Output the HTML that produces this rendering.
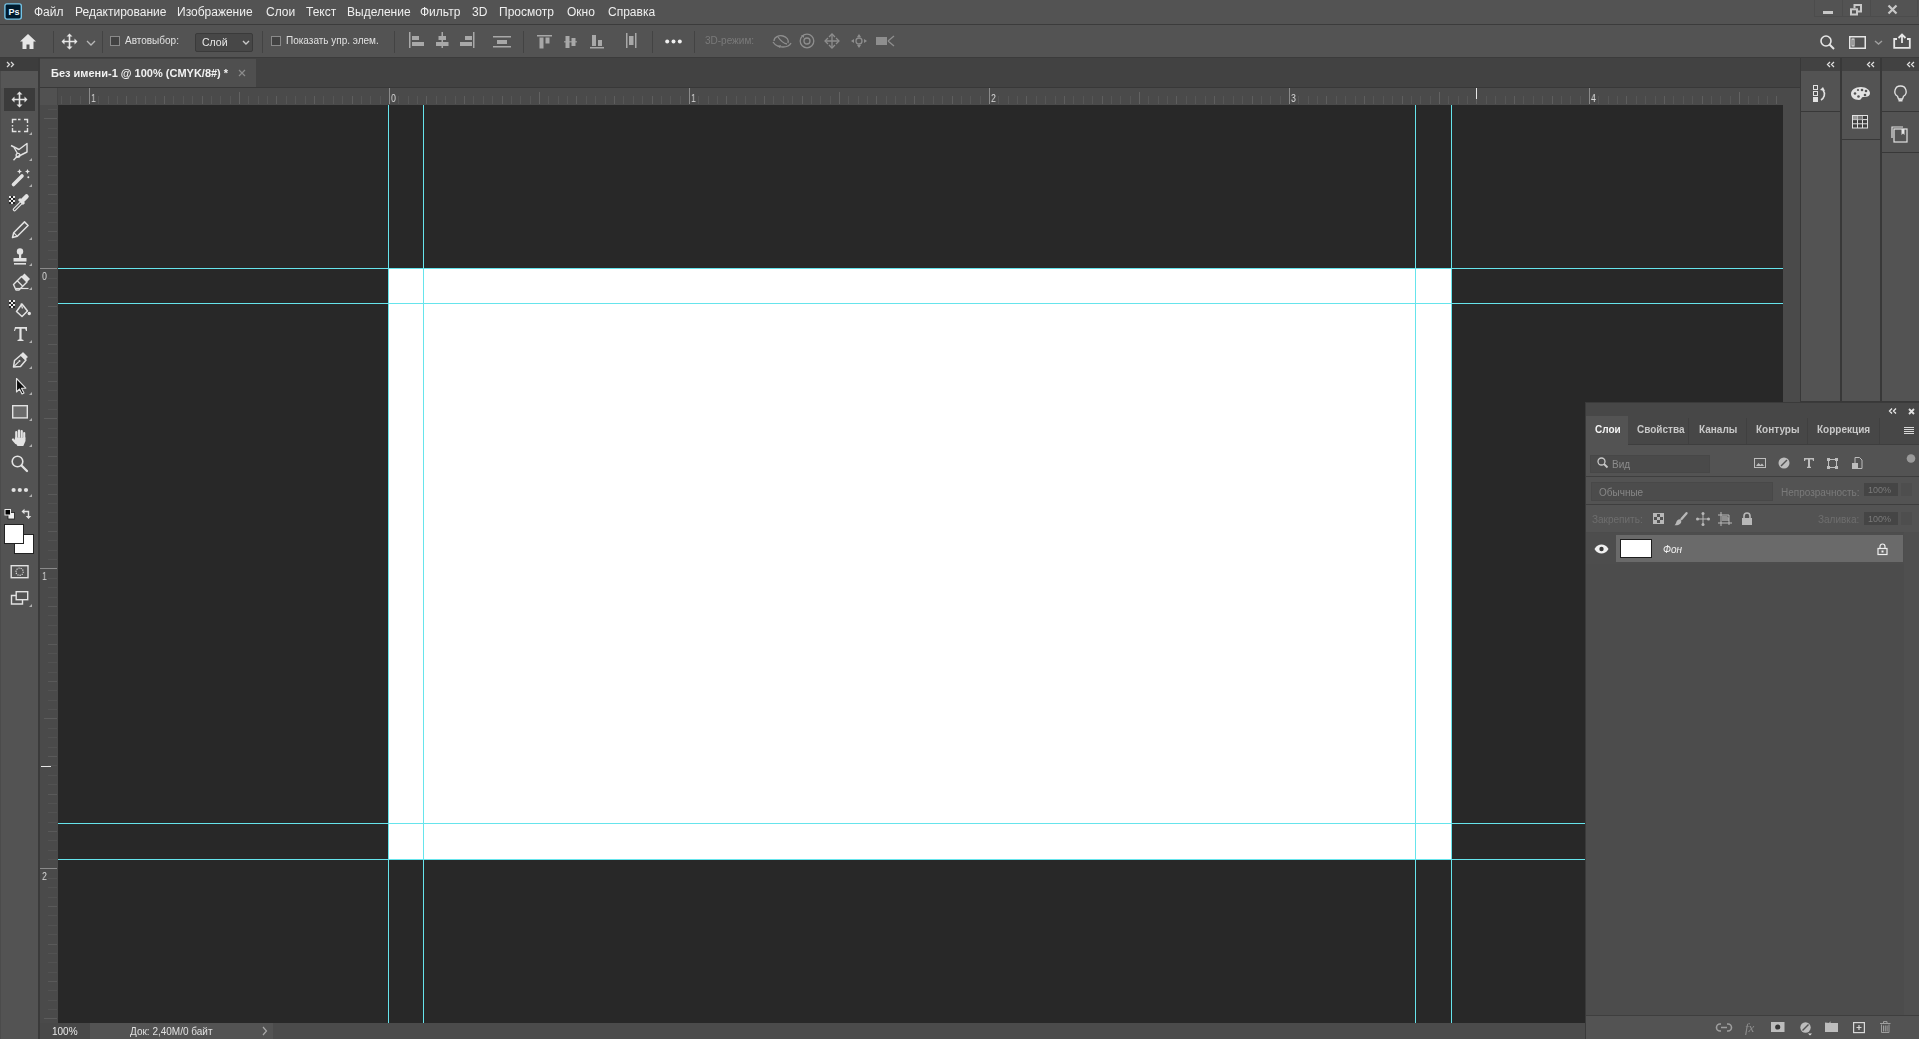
<!DOCTYPE html>
<html><head><meta charset="utf-8">
<style>
*{box-sizing:border-box;margin:0;padding:0}
html,body{width:1919px;height:1039px;overflow:hidden;background:#535353;font-family:"Liberation Sans",sans-serif;color:#e8e8e8}
.a{position:absolute}
.t{position:absolute;white-space:nowrap;line-height:1;will-change:transform}
svg{position:absolute;overflow:visible}
</style></head><body>

<div class="a" style="left:0px;top:0px;width:1919px;height:24px;background:#535353;"></div>
<div class="a" style="left:0px;top:24px;width:1919px;height:1px;background:#3b3b3b;"></div>
<svg style="left:4px;top:3px;" width="19" height="17" viewBox="0 0 19 17"><rect x="0.9" y="0.9" width="16.4" height="15.2" rx="2" fill="#001b2e" stroke="#74c4e6" stroke-width="1.4"/><text x="4.6" y="12.2" font-family="Liberation Sans" font-weight="700" font-size="9" fill="#f0faff">Ps</text></svg>
<div class="t" style="left:34px;top:5.84px;font-size:12px;color:#efefef;font-weight:400;font-style:normal;">Файл</div>
<div class="t" style="left:75px;top:5.84px;font-size:12px;color:#efefef;font-weight:400;font-style:normal;">Редактирование</div>
<div class="t" style="left:177px;top:5.84px;font-size:12px;color:#efefef;font-weight:400;font-style:normal;">Изображение</div>
<div class="t" style="left:266px;top:5.84px;font-size:12px;color:#efefef;font-weight:400;font-style:normal;">Слои</div>
<div class="t" style="left:306px;top:5.84px;font-size:12px;color:#efefef;font-weight:400;font-style:normal;">Текст</div>
<div class="t" style="left:347px;top:5.84px;font-size:12px;color:#efefef;font-weight:400;font-style:normal;">Выделение</div>
<div class="t" style="left:420px;top:5.84px;font-size:12px;color:#efefef;font-weight:400;font-style:normal;">Фильтр</div>
<div class="t" style="left:472px;top:5.84px;font-size:12px;color:#efefef;font-weight:400;font-style:normal;">3D</div>
<div class="t" style="left:499px;top:5.84px;font-size:12px;color:#efefef;font-weight:400;font-style:normal;">Просмотр</div>
<div class="t" style="left:567px;top:5.84px;font-size:12px;color:#efefef;font-weight:400;font-style:normal;">Окно</div>
<div class="t" style="left:608px;top:5.84px;font-size:12px;color:#efefef;font-weight:400;font-style:normal;">Справка</div>
<div class="a" style="left:1823px;top:11px;width:10px;height:3px;background:#c8c8c8;"></div>
<svg style="left:0px;top:0px;" width="1" height="1" viewBox="0 0 1 1"><path d="M1854.5 8V5h6.5v6.5h-3" fill="none" stroke="#c8c8c8" stroke-width="2"/><rect x="1851" y="9.3" width="6" height="5.2" fill="none" stroke="#c8c8c8" stroke-width="2"/></svg>
<div class="a" style="left:1814px;top:0px;width:1px;height:17px;background:#4c4c4c;"></div>
<div class="a" style="left:1842px;top:0px;width:1px;height:17px;background:#4c4c4c;"></div>
<div class="a" style="left:1870px;top:0px;width:1px;height:17px;background:#4c4c4c;"></div>
<div class="a" style="left:1917px;top:0px;width:1px;height:17px;background:#4c4c4c;"></div>
<div class="a" style="left:1814px;top:16px;width:104px;height:1px;background:#4c4c4c;"></div>
<div class="a" style="left:0px;top:25px;width:1px;height:32px;background:#464646;"></div>
<svg style="left:1887px;top:4px;" width="12" height="10" viewBox="0 0 12 10"><path d="M1.5 1.5l8 8M9.5 1.5l-8 8" stroke="#c8c8c8" stroke-width="2.2"/></svg>
<div class="a" style="left:0px;top:25px;width:1919px;height:32px;background:#535353;"></div>
<div class="a" style="left:0px;top:57px;width:1919px;height:1px;background:#3b3b3b;"></div>
<svg style="left:19px;top:33px;" width="18" height="17" viewBox="0 0 18 17"><path d="M9 1L1 8.5h2.5V16h4v-4.5h3V16h4V8.5H17z" fill="#e6e6e6"/></svg>
<div class="a" style="left:53px;top:31px;width:1px;height:22px;background:#434343;"></div>
<svg style="left:0px;top:0px;" width="1" height="1" viewBox="0 0 1 1"><g transform="translate(69.5,41.5) scale(1.0)" fill="#e6e6e6" stroke="#e6e6e6"><path d="M-6 0H6M0 -6V6" stroke-width="1.6"/><path d="M-8 0l3-3v6zM8 0l-3-3v6zM0 -8l-3 3h6zM0 8l-3-3h6z" stroke="none"/></g></svg>
<svg style="left:86px;top:40px;" width="10" height="6" viewBox="0 0 10 6"><path d="M1 1l4 4 4-4" fill="none" stroke="#b8b8b8" stroke-width="1.3"/></svg>
<div class="a" style="left:102px;top:31px;width:1px;height:22px;background:#434343;"></div>
<div class="a" style="left:110px;top:36px;width:10px;height:10px;background:#424242;border:1px solid #8a8a8a"></div>
<div class="t" style="left:125px;top:35.83px;font-size:10px;color:#e0e0e0;font-weight:400;font-style:normal;">Автовыбор:</div>
<div class="a" style="left:195px;top:33px;width:58px;height:19px;background:#474747;border:1px solid #3a3a3a;border-radius:2px"></div>
<div class="t" style="left:202px;top:37.11px;font-size:10.5px;color:#e8e8e8;font-weight:400;font-style:normal;">Слой</div>
<svg style="left:242px;top:40px;" width="8" height="6" viewBox="0 0 8 6"><path d="M1 1l3 3 3-3" fill="none" stroke="#c8c8c8" stroke-width="1.4"/></svg>
<div class="a" style="left:262px;top:31px;width:1px;height:22px;background:#434343;"></div>
<div class="a" style="left:271px;top:36px;width:10px;height:10px;background:#424242;border:1px solid #8a8a8a"></div>
<div class="t" style="left:286px;top:35.83px;font-size:10px;color:#e0e0e0;font-weight:400;font-style:normal;">Показать упр. элем.</div>
<div class="a" style="left:394px;top:31px;width:1px;height:22px;background:#434343;"></div>
<svg style="left:409px;top:32px;" width="16" height="17" viewBox="0 0 16 17"><rect x="0" y="0" width="1.5" height="16" fill="#a8a8a8"/><rect x="3" y="4" width="7" height="4" fill="#a8a8a8"/><rect x="3" y="10" width="12" height="4" fill="#a8a8a8"/></svg>
<svg style="left:436px;top:32px;" width="14" height="17" viewBox="0 0 14 17"><rect x="5.5" y="0" width="1.5" height="16" fill="#a8a8a8"/><rect x="2.5" y="4" width="7.5" height="4" fill="#a8a8a8"/><rect x="0" y="10" width="12.5" height="4" fill="#a8a8a8"/></svg>
<svg style="left:460px;top:32px;" width="16" height="17" viewBox="0 0 16 17"><rect x="13" y="0" width="1.5" height="16" fill="#a8a8a8"/><rect x="5" y="4" width="7" height="4" fill="#a8a8a8"/><rect x="0" y="10" width="12" height="4" fill="#a8a8a8"/></svg>
<svg style="left:493px;top:36px;" width="19" height="12" viewBox="0 0 19 12"><rect x="0" y="0" width="18" height="1.5" fill="#a8a8a8"/><rect x="4" y="4" width="10" height="4" fill="#a8a8a8"/><rect x="0" y="10" width="18" height="1.5" fill="#a8a8a8"/></svg>
<div class="a" style="left:523px;top:31px;width:1px;height:22px;background:#434343;"></div>
<svg style="left:537px;top:35px;" width="16" height="14" viewBox="0 0 16 14"><rect x="0" y="0" width="15" height="1.5" fill="#a8a8a8"/><rect x="2.5" y="2.5" width="4" height="11" fill="#a8a8a8"/><rect x="8.5" y="2.5" width="4" height="6" fill="#a8a8a8"/></svg>
<svg style="left:564px;top:35px;" width="14" height="14" viewBox="0 0 14 14"><rect x="0" y="6" width="13" height="1.5" fill="#a8a8a8" opacity="0.7"/><rect x="1.5" y="1" width="4" height="12" fill="#a8a8a8"/><rect x="7.5" y="3" width="4" height="8" fill="#a8a8a8"/></svg>
<svg style="left:590px;top:34px;" width="15" height="15" viewBox="0 0 15 15"><rect x="0" y="13" width="14" height="1.5" fill="#a8a8a8"/><rect x="2" y="1" width="4" height="11" fill="#a8a8a8"/><rect x="8" y="6" width="4" height="6" fill="#a8a8a8"/></svg>
<svg style="left:626px;top:33px;" width="11" height="16" viewBox="0 0 11 16"><rect x="0" y="0" width="1.5" height="15" fill="#a8a8a8"/><rect x="9" y="0" width="1.5" height="15" fill="#a8a8a8"/><rect x="3" y="3" width="4.5" height="9" fill="#a8a8a8"/></svg>
<div class="a" style="left:652px;top:31px;width:1px;height:22px;background:#434343;"></div>
<svg style="left:665px;top:39px;" width="18" height="6" viewBox="0 0 18 6"><circle cx="2.2" cy="2.5" r="2" fill="#f0f0f0"/><circle cx="8.5" cy="2.5" r="2" fill="#f0f0f0"/><circle cx="14.8" cy="2.5" r="2" fill="#f0f0f0"/></svg>
<div class="a" style="left:694px;top:31px;width:1px;height:22px;background:#434343;"></div>
<div class="t" style="left:705px;top:35.83px;font-size:10px;color:#7a7a7a;font-weight:400;font-style:normal;">3D-режим:</div>
<svg style="left:772px;top:33px;" width="20" height="16" viewBox="0 0 20 16"><g fill="none" stroke="#8e8e8e" stroke-width="1.3"><path d="M2 8c0-4 5-6 9-5 4 1 6 4 5 7"/><path d="M1 9c2 3 6 5 10 5 4 0 7-2 8-4"/><path d="M6 4c2 3 4 6 9 7"/></g><path d="M5 13l3 2 1-3z" fill="#8e8e8e"/></svg>
<svg style="left:799px;top:33px;" width="16" height="16" viewBox="0 0 16 16"><g fill="none" stroke="#8e8e8e" stroke-width="1.3"><circle cx="8" cy="8" r="6.8"/><circle cx="8" cy="8" r="3"/></g><path d="M2 2l3 0 0 3z" fill="#8e8e8e"/></svg>
<svg style="left:824px;top:33px;" width="16" height="16" viewBox="0 0 16 16"><g fill="none" stroke="#8e8e8e" stroke-width="1.3"><path d="M8 1v14M1 8h14"/><path d="M5 4l3-3 3 3M5 12l3 3 3-3M4 5l-3 3 3 3M12 5l3 3-3 3"/></g></svg>
<svg style="left:850px;top:33px;" width="18" height="16" viewBox="0 0 18 16"><g fill="#8e8e8e"><circle cx="9" cy="8" r="3" fill="none" stroke="#8e8e8e" stroke-width="1.3"/><path d="M9 1l2 3H7zM9 15l2-3H7zM1 8l3-2v4zM17 8l-3-2v4z"/></g></svg>
<svg style="left:876px;top:35px;" width="20" height="12" viewBox="0 0 20 12"><g fill="#8e8e8e"><rect x="0" y="2" width="11" height="8"/></g><path d="M12 6l6-5M12 6l6 5" stroke="#8e8e8e" stroke-width="1.3" fill="none"/></svg>
<svg style="left:1820px;top:35px;" width="15" height="15" viewBox="0 0 15 15"><circle cx="6" cy="6" r="5" fill="none" stroke="#e6e6e6" stroke-width="1.6"/><path d="M9.5 9.5l4.5 4.5" stroke="#e6e6e6" stroke-width="2"/></svg>
<svg style="left:1849px;top:36px;" width="17" height="13" viewBox="0 0 17 13"><rect x="0.75" y="0.75" width="15.5" height="11.5" fill="none" stroke="#e6e6e6" stroke-width="1.5"/><rect x="3" y="3" width="2" height="7" fill="none" stroke="#e6e6e6" stroke-width="1"/></svg>
<svg style="left:1874px;top:40px;" width="9" height="5" viewBox="0 0 9 5"><path d="M1 1l3.5 3 3.5-3" fill="none" stroke="#a0a0a0" stroke-width="1.4"/></svg>
<svg style="left:1893px;top:33px;" width="18" height="16" viewBox="0 0 18 16"><path d="M4 6H1.2v8.8h15.6V6H14" fill="none" stroke="#e6e6e6" stroke-width="1.8"/><path d="M9 10V2M5.5 5L9 1.5 12.5 5" fill="none" stroke="#e6e6e6" stroke-width="1.8"/></svg>
<div class="a" style="left:40px;top:58px;width:1760px;height:30px;background:#424242;"></div>
<div class="a" style="left:40px;top:59px;width:216px;height:28px;background:#4f4f4f;"></div>
<div class="a" style="left:40px;top:87px;width:1760px;height:1px;background:#383838;"></div>
<div class="t" style="left:51px;top:67.69px;font-size:11px;color:#f2f2f2;font-weight:700;font-style:normal;">Без имени-1 @ 100% (CMYK/8#) *</div>
<svg style="left:238px;top:69px;" width="8" height="8" viewBox="0 0 8 8"><path d="M1 1l6 6M7 1l-6 6" stroke="#8c8c8c" stroke-width="1.2"/></svg>
<div class="a" style="left:40px;top:88px;width:1760px;height:17px;background:#4a4a4a;"></div>
<div class="a" style="left:40px;top:105px;width:18px;height:918px;background:#4a4a4a;"></div>
<div class="a" style="left:1783px;top:88px;width:17px;height:935px;background:#4a4a4a;"></div>
<div class="a" style="left:40px;top:88px;width:17px;height:17px;background:#515151;"></div>
<div class="a" style="left:57px;top:88px;width:1px;height:17px;background:#444444;"></div>
<svg style="left:0px;top:0px;pointer-events:none" width="1919" height="1039" viewBox="0 0 1919 1039"><rect x="61" y="96" width="1" height="8" fill="#565656"/><rect x="70" y="96" width="1" height="8" fill="#565656"/><rect x="80" y="96" width="1" height="8" fill="#565656"/><rect x="89" y="88" width="1" height="16" fill="#8a8a8a"/><rect x="98" y="96" width="1" height="8" fill="#565656"/><rect x="108" y="96" width="1" height="8" fill="#565656"/><rect x="117" y="96" width="1" height="8" fill="#565656"/><rect x="126" y="96" width="1" height="8" fill="#5e5e5e"/><rect x="136" y="96" width="1" height="8" fill="#565656"/><rect x="145" y="96" width="1" height="8" fill="#565656"/><rect x="155" y="96" width="1" height="8" fill="#565656"/><rect x="164" y="96" width="1" height="8" fill="#5e5e5e"/><rect x="173" y="96" width="1" height="8" fill="#565656"/><rect x="183" y="96" width="1" height="8" fill="#565656"/><rect x="192" y="96" width="1" height="8" fill="#565656"/><rect x="202" y="96" width="1" height="8" fill="#5e5e5e"/><rect x="211" y="96" width="1" height="8" fill="#565656"/><rect x="220" y="96" width="1" height="8" fill="#565656"/><rect x="230" y="96" width="1" height="8" fill="#565656"/><rect x="239" y="92" width="1" height="12" fill="#626262"/><rect x="248" y="96" width="1" height="8" fill="#565656"/><rect x="258" y="96" width="1" height="8" fill="#565656"/><rect x="267" y="96" width="1" height="8" fill="#565656"/><rect x="276" y="96" width="1" height="8" fill="#5e5e5e"/><rect x="286" y="96" width="1" height="8" fill="#565656"/><rect x="295" y="96" width="1" height="8" fill="#565656"/><rect x="305" y="96" width="1" height="8" fill="#565656"/><rect x="314" y="96" width="1" height="8" fill="#5e5e5e"/><rect x="323" y="96" width="1" height="8" fill="#565656"/><rect x="333" y="96" width="1" height="8" fill="#565656"/><rect x="342" y="96" width="1" height="8" fill="#565656"/><rect x="352" y="96" width="1" height="8" fill="#5e5e5e"/><rect x="361" y="96" width="1" height="8" fill="#565656"/><rect x="370" y="96" width="1" height="8" fill="#565656"/><rect x="380" y="96" width="1" height="8" fill="#565656"/><rect x="389" y="88" width="1" height="16" fill="#8a8a8a"/><rect x="398" y="96" width="1" height="8" fill="#565656"/><rect x="408" y="96" width="1" height="8" fill="#565656"/><rect x="417" y="96" width="1" height="8" fill="#565656"/><rect x="426" y="96" width="1" height="8" fill="#5e5e5e"/><rect x="436" y="96" width="1" height="8" fill="#565656"/><rect x="445" y="96" width="1" height="8" fill="#565656"/><rect x="455" y="96" width="1" height="8" fill="#565656"/><rect x="464" y="96" width="1" height="8" fill="#5e5e5e"/><rect x="473" y="96" width="1" height="8" fill="#565656"/><rect x="483" y="96" width="1" height="8" fill="#565656"/><rect x="492" y="96" width="1" height="8" fill="#565656"/><rect x="502" y="96" width="1" height="8" fill="#5e5e5e"/><rect x="511" y="96" width="1" height="8" fill="#565656"/><rect x="520" y="96" width="1" height="8" fill="#565656"/><rect x="530" y="96" width="1" height="8" fill="#565656"/><rect x="539" y="92" width="1" height="12" fill="#626262"/><rect x="548" y="96" width="1" height="8" fill="#565656"/><rect x="558" y="96" width="1" height="8" fill="#565656"/><rect x="567" y="96" width="1" height="8" fill="#565656"/><rect x="576" y="96" width="1" height="8" fill="#5e5e5e"/><rect x="586" y="96" width="1" height="8" fill="#565656"/><rect x="595" y="96" width="1" height="8" fill="#565656"/><rect x="605" y="96" width="1" height="8" fill="#565656"/><rect x="614" y="96" width="1" height="8" fill="#5e5e5e"/><rect x="623" y="96" width="1" height="8" fill="#565656"/><rect x="633" y="96" width="1" height="8" fill="#565656"/><rect x="642" y="96" width="1" height="8" fill="#565656"/><rect x="652" y="96" width="1" height="8" fill="#5e5e5e"/><rect x="661" y="96" width="1" height="8" fill="#565656"/><rect x="670" y="96" width="1" height="8" fill="#565656"/><rect x="680" y="96" width="1" height="8" fill="#565656"/><rect x="689" y="88" width="1" height="16" fill="#8a8a8a"/><rect x="698" y="96" width="1" height="8" fill="#565656"/><rect x="708" y="96" width="1" height="8" fill="#565656"/><rect x="717" y="96" width="1" height="8" fill="#565656"/><rect x="726" y="96" width="1" height="8" fill="#5e5e5e"/><rect x="736" y="96" width="1" height="8" fill="#565656"/><rect x="745" y="96" width="1" height="8" fill="#565656"/><rect x="755" y="96" width="1" height="8" fill="#565656"/><rect x="764" y="96" width="1" height="8" fill="#5e5e5e"/><rect x="773" y="96" width="1" height="8" fill="#565656"/><rect x="783" y="96" width="1" height="8" fill="#565656"/><rect x="792" y="96" width="1" height="8" fill="#565656"/><rect x="802" y="96" width="1" height="8" fill="#5e5e5e"/><rect x="811" y="96" width="1" height="8" fill="#565656"/><rect x="820" y="96" width="1" height="8" fill="#565656"/><rect x="830" y="96" width="1" height="8" fill="#565656"/><rect x="839" y="92" width="1" height="12" fill="#626262"/><rect x="848" y="96" width="1" height="8" fill="#565656"/><rect x="858" y="96" width="1" height="8" fill="#565656"/><rect x="867" y="96" width="1" height="8" fill="#565656"/><rect x="876" y="96" width="1" height="8" fill="#5e5e5e"/><rect x="886" y="96" width="1" height="8" fill="#565656"/><rect x="895" y="96" width="1" height="8" fill="#565656"/><rect x="905" y="96" width="1" height="8" fill="#565656"/><rect x="914" y="96" width="1" height="8" fill="#5e5e5e"/><rect x="923" y="96" width="1" height="8" fill="#565656"/><rect x="933" y="96" width="1" height="8" fill="#565656"/><rect x="942" y="96" width="1" height="8" fill="#565656"/><rect x="952" y="96" width="1" height="8" fill="#5e5e5e"/><rect x="961" y="96" width="1" height="8" fill="#565656"/><rect x="970" y="96" width="1" height="8" fill="#565656"/><rect x="980" y="96" width="1" height="8" fill="#565656"/><rect x="989" y="88" width="1" height="16" fill="#8a8a8a"/><rect x="998" y="96" width="1" height="8" fill="#565656"/><rect x="1008" y="96" width="1" height="8" fill="#565656"/><rect x="1017" y="96" width="1" height="8" fill="#565656"/><rect x="1026" y="96" width="1" height="8" fill="#5e5e5e"/><rect x="1036" y="96" width="1" height="8" fill="#565656"/><rect x="1045" y="96" width="1" height="8" fill="#565656"/><rect x="1055" y="96" width="1" height="8" fill="#565656"/><rect x="1064" y="96" width="1" height="8" fill="#5e5e5e"/><rect x="1073" y="96" width="1" height="8" fill="#565656"/><rect x="1083" y="96" width="1" height="8" fill="#565656"/><rect x="1092" y="96" width="1" height="8" fill="#565656"/><rect x="1102" y="96" width="1" height="8" fill="#5e5e5e"/><rect x="1111" y="96" width="1" height="8" fill="#565656"/><rect x="1120" y="96" width="1" height="8" fill="#565656"/><rect x="1130" y="96" width="1" height="8" fill="#565656"/><rect x="1139" y="92" width="1" height="12" fill="#626262"/><rect x="1148" y="96" width="1" height="8" fill="#565656"/><rect x="1158" y="96" width="1" height="8" fill="#565656"/><rect x="1167" y="96" width="1" height="8" fill="#565656"/><rect x="1176" y="96" width="1" height="8" fill="#5e5e5e"/><rect x="1186" y="96" width="1" height="8" fill="#565656"/><rect x="1195" y="96" width="1" height="8" fill="#565656"/><rect x="1205" y="96" width="1" height="8" fill="#565656"/><rect x="1214" y="96" width="1" height="8" fill="#5e5e5e"/><rect x="1223" y="96" width="1" height="8" fill="#565656"/><rect x="1233" y="96" width="1" height="8" fill="#565656"/><rect x="1242" y="96" width="1" height="8" fill="#565656"/><rect x="1252" y="96" width="1" height="8" fill="#5e5e5e"/><rect x="1261" y="96" width="1" height="8" fill="#565656"/><rect x="1270" y="96" width="1" height="8" fill="#565656"/><rect x="1280" y="96" width="1" height="8" fill="#565656"/><rect x="1289" y="88" width="1" height="16" fill="#8a8a8a"/><rect x="1298" y="96" width="1" height="8" fill="#565656"/><rect x="1308" y="96" width="1" height="8" fill="#565656"/><rect x="1317" y="96" width="1" height="8" fill="#565656"/><rect x="1326" y="96" width="1" height="8" fill="#5e5e5e"/><rect x="1336" y="96" width="1" height="8" fill="#565656"/><rect x="1345" y="96" width="1" height="8" fill="#565656"/><rect x="1355" y="96" width="1" height="8" fill="#565656"/><rect x="1364" y="96" width="1" height="8" fill="#5e5e5e"/><rect x="1373" y="96" width="1" height="8" fill="#565656"/><rect x="1383" y="96" width="1" height="8" fill="#565656"/><rect x="1392" y="96" width="1" height="8" fill="#565656"/><rect x="1402" y="96" width="1" height="8" fill="#5e5e5e"/><rect x="1411" y="96" width="1" height="8" fill="#565656"/><rect x="1420" y="96" width="1" height="8" fill="#565656"/><rect x="1430" y="96" width="1" height="8" fill="#565656"/><rect x="1439" y="92" width="1" height="12" fill="#626262"/><rect x="1448" y="96" width="1" height="8" fill="#565656"/><rect x="1458" y="96" width="1" height="8" fill="#565656"/><rect x="1467" y="96" width="1" height="8" fill="#565656"/><rect x="1476" y="96" width="1" height="8" fill="#5e5e5e"/><rect x="1486" y="96" width="1" height="8" fill="#565656"/><rect x="1495" y="96" width="1" height="8" fill="#565656"/><rect x="1505" y="96" width="1" height="8" fill="#565656"/><rect x="1514" y="96" width="1" height="8" fill="#5e5e5e"/><rect x="1523" y="96" width="1" height="8" fill="#565656"/><rect x="1533" y="96" width="1" height="8" fill="#565656"/><rect x="1542" y="96" width="1" height="8" fill="#565656"/><rect x="1552" y="96" width="1" height="8" fill="#5e5e5e"/><rect x="1561" y="96" width="1" height="8" fill="#565656"/><rect x="1570" y="96" width="1" height="8" fill="#565656"/><rect x="1580" y="96" width="1" height="8" fill="#565656"/><rect x="1589" y="88" width="1" height="16" fill="#8a8a8a"/><rect x="1598" y="96" width="1" height="8" fill="#565656"/><rect x="1608" y="96" width="1" height="8" fill="#565656"/><rect x="1617" y="96" width="1" height="8" fill="#565656"/><rect x="1626" y="96" width="1" height="8" fill="#5e5e5e"/><rect x="1636" y="96" width="1" height="8" fill="#565656"/><rect x="1645" y="96" width="1" height="8" fill="#565656"/><rect x="1655" y="96" width="1" height="8" fill="#565656"/><rect x="1664" y="96" width="1" height="8" fill="#5e5e5e"/><rect x="1673" y="96" width="1" height="8" fill="#565656"/><rect x="1683" y="96" width="1" height="8" fill="#565656"/><rect x="1692" y="96" width="1" height="8" fill="#565656"/><rect x="1702" y="96" width="1" height="8" fill="#5e5e5e"/><rect x="1711" y="96" width="1" height="8" fill="#565656"/><rect x="1720" y="96" width="1" height="8" fill="#565656"/><rect x="1730" y="96" width="1" height="8" fill="#565656"/><rect x="1739" y="92" width="1" height="12" fill="#626262"/><rect x="1748" y="96" width="1" height="8" fill="#565656"/><rect x="1758" y="96" width="1" height="8" fill="#565656"/><rect x="1767" y="96" width="1" height="8" fill="#565656"/><rect x="1776" y="96" width="1" height="8" fill="#5e5e5e"/></svg>
<div class="t" style="left:91px;top:92.69px;font-size:11px;color:#d8d8d8;font-weight:400;font-style:normal;transform:scaleX(0.8);transform-origin:left">1</div>
<div class="t" style="left:391px;top:92.69px;font-size:11px;color:#d8d8d8;font-weight:400;font-style:normal;transform:scaleX(0.8);transform-origin:left">0</div>
<div class="t" style="left:691px;top:92.69px;font-size:11px;color:#d8d8d8;font-weight:400;font-style:normal;transform:scaleX(0.8);transform-origin:left">1</div>
<div class="t" style="left:991px;top:92.69px;font-size:11px;color:#d8d8d8;font-weight:400;font-style:normal;transform:scaleX(0.8);transform-origin:left">2</div>
<div class="t" style="left:1291px;top:92.69px;font-size:11px;color:#d8d8d8;font-weight:400;font-style:normal;transform:scaleX(0.8);transform-origin:left">3</div>
<div class="t" style="left:1591px;top:92.69px;font-size:11px;color:#d8d8d8;font-weight:400;font-style:normal;transform:scaleX(0.8);transform-origin:left">4</div>
<svg style="left:0px;top:0px;pointer-events:none" width="1919" height="1039" viewBox="0 0 1919 1039"><rect x="48" y="109" width="9" height="1" fill="#525252"/><rect x="44" y="118" width="13" height="1" fill="#5c5c5c"/><rect x="48" y="128" width="9" height="1" fill="#525252"/><rect x="48" y="137" width="9" height="1" fill="#525252"/><rect x="48" y="147" width="9" height="1" fill="#525252"/><rect x="48" y="156" width="9" height="1" fill="#595959"/><rect x="48" y="165" width="9" height="1" fill="#525252"/><rect x="48" y="175" width="9" height="1" fill="#525252"/><rect x="48" y="184" width="9" height="1" fill="#525252"/><rect x="48" y="194" width="9" height="1" fill="#595959"/><rect x="48" y="203" width="9" height="1" fill="#525252"/><rect x="48" y="212" width="9" height="1" fill="#525252"/><rect x="48" y="222" width="9" height="1" fill="#525252"/><rect x="48" y="231" width="9" height="1" fill="#595959"/><rect x="48" y="240" width="9" height="1" fill="#525252"/><rect x="48" y="250" width="9" height="1" fill="#525252"/><rect x="48" y="259" width="9" height="1" fill="#525252"/><rect x="40" y="268" width="17" height="1" fill="#8a8a8a"/><rect x="48" y="278" width="9" height="1" fill="#525252"/><rect x="48" y="287" width="9" height="1" fill="#525252"/><rect x="48" y="297" width="9" height="1" fill="#525252"/><rect x="48" y="306" width="9" height="1" fill="#595959"/><rect x="48" y="315" width="9" height="1" fill="#525252"/><rect x="48" y="325" width="9" height="1" fill="#525252"/><rect x="48" y="334" width="9" height="1" fill="#525252"/><rect x="48" y="344" width="9" height="1" fill="#595959"/><rect x="48" y="353" width="9" height="1" fill="#525252"/><rect x="48" y="362" width="9" height="1" fill="#525252"/><rect x="48" y="372" width="9" height="1" fill="#525252"/><rect x="48" y="381" width="9" height="1" fill="#595959"/><rect x="48" y="390" width="9" height="1" fill="#525252"/><rect x="48" y="400" width="9" height="1" fill="#525252"/><rect x="48" y="409" width="9" height="1" fill="#525252"/><rect x="44" y="418" width="13" height="1" fill="#5c5c5c"/><rect x="48" y="428" width="9" height="1" fill="#525252"/><rect x="48" y="437" width="9" height="1" fill="#525252"/><rect x="48" y="447" width="9" height="1" fill="#525252"/><rect x="48" y="456" width="9" height="1" fill="#595959"/><rect x="48" y="465" width="9" height="1" fill="#525252"/><rect x="48" y="475" width="9" height="1" fill="#525252"/><rect x="48" y="484" width="9" height="1" fill="#525252"/><rect x="48" y="494" width="9" height="1" fill="#595959"/><rect x="48" y="503" width="9" height="1" fill="#525252"/><rect x="48" y="512" width="9" height="1" fill="#525252"/><rect x="48" y="522" width="9" height="1" fill="#525252"/><rect x="48" y="531" width="9" height="1" fill="#595959"/><rect x="48" y="540" width="9" height="1" fill="#525252"/><rect x="48" y="550" width="9" height="1" fill="#525252"/><rect x="48" y="559" width="9" height="1" fill="#525252"/><rect x="40" y="568" width="17" height="1" fill="#8a8a8a"/><rect x="48" y="578" width="9" height="1" fill="#525252"/><rect x="48" y="587" width="9" height="1" fill="#525252"/><rect x="48" y="597" width="9" height="1" fill="#525252"/><rect x="48" y="606" width="9" height="1" fill="#595959"/><rect x="48" y="615" width="9" height="1" fill="#525252"/><rect x="48" y="625" width="9" height="1" fill="#525252"/><rect x="48" y="634" width="9" height="1" fill="#525252"/><rect x="48" y="644" width="9" height="1" fill="#595959"/><rect x="48" y="653" width="9" height="1" fill="#525252"/><rect x="48" y="662" width="9" height="1" fill="#525252"/><rect x="48" y="672" width="9" height="1" fill="#525252"/><rect x="48" y="681" width="9" height="1" fill="#595959"/><rect x="48" y="690" width="9" height="1" fill="#525252"/><rect x="48" y="700" width="9" height="1" fill="#525252"/><rect x="48" y="709" width="9" height="1" fill="#525252"/><rect x="44" y="718" width="13" height="1" fill="#5c5c5c"/><rect x="48" y="728" width="9" height="1" fill="#525252"/><rect x="48" y="737" width="9" height="1" fill="#525252"/><rect x="48" y="747" width="9" height="1" fill="#525252"/><rect x="48" y="756" width="9" height="1" fill="#595959"/><rect x="48" y="765" width="9" height="1" fill="#525252"/><rect x="48" y="775" width="9" height="1" fill="#525252"/><rect x="48" y="784" width="9" height="1" fill="#525252"/><rect x="48" y="794" width="9" height="1" fill="#595959"/><rect x="48" y="803" width="9" height="1" fill="#525252"/><rect x="48" y="812" width="9" height="1" fill="#525252"/><rect x="48" y="822" width="9" height="1" fill="#525252"/><rect x="48" y="831" width="9" height="1" fill="#595959"/><rect x="48" y="840" width="9" height="1" fill="#525252"/><rect x="48" y="850" width="9" height="1" fill="#525252"/><rect x="48" y="859" width="9" height="1" fill="#525252"/><rect x="40" y="868" width="17" height="1" fill="#8a8a8a"/><rect x="48" y="878" width="9" height="1" fill="#525252"/><rect x="48" y="887" width="9" height="1" fill="#525252"/><rect x="48" y="897" width="9" height="1" fill="#525252"/><rect x="48" y="906" width="9" height="1" fill="#595959"/><rect x="48" y="915" width="9" height="1" fill="#525252"/><rect x="48" y="925" width="9" height="1" fill="#525252"/><rect x="48" y="934" width="9" height="1" fill="#525252"/><rect x="48" y="944" width="9" height="1" fill="#595959"/><rect x="48" y="953" width="9" height="1" fill="#525252"/><rect x="48" y="962" width="9" height="1" fill="#525252"/><rect x="48" y="972" width="9" height="1" fill="#525252"/><rect x="48" y="981" width="9" height="1" fill="#595959"/><rect x="48" y="990" width="9" height="1" fill="#525252"/><rect x="48" y="1000" width="9" height="1" fill="#525252"/><rect x="48" y="1009" width="9" height="1" fill="#525252"/><rect x="44" y="1018" width="13" height="1" fill="#5c5c5c"/></svg>
<div class="t" style="left:42px;top:270.69px;font-size:11px;color:#d8d8d8;font-weight:400;font-style:normal;transform:scaleX(0.8);transform-origin:left">0</div>
<div class="t" style="left:42px;top:570.69px;font-size:11px;color:#d8d8d8;font-weight:400;font-style:normal;transform:scaleX(0.8);transform-origin:left">1</div>
<div class="t" style="left:42px;top:870.69px;font-size:11px;color:#d8d8d8;font-weight:400;font-style:normal;transform:scaleX(0.8);transform-origin:left">2</div>
<div class="a" style="left:1476px;top:88px;width:1px;height:11px;background:#e8e8e8;"></div>
<div class="a" style="left:41px;top:766px;width:10px;height:1px;background:#e8e8e8;"></div>
<div class="a" style="left:58px;top:105px;width:1725px;height:918px;background:#282828;"></div>
<div class="a" style="left:388px;top:268px;width:1064px;height:592px;background:#ffffff;"></div>
<div class="a" style="left:388px;top:105px;width:1px;height:918px;background:#66e4ec;"></div>
<div class="a" style="left:423px;top:105px;width:1px;height:918px;background:#66e4ec;"></div>
<div class="a" style="left:1415px;top:105px;width:1px;height:918px;background:#66e4ec;"></div>
<div class="a" style="left:1451px;top:105px;width:1px;height:918px;background:#66e4ec;"></div>
<div class="a" style="left:58px;top:268px;width:1725px;height:1px;background:#66e4ec;"></div>
<div class="a" style="left:58px;top:303px;width:1725px;height:1px;background:#66e4ec;"></div>
<div class="a" style="left:58px;top:823px;width:1528px;height:1px;background:#66e4ec;"></div>
<div class="a" style="left:58px;top:859px;width:1528px;height:1px;background:#66e4ec;"></div>
<div class="a" style="left:40px;top:1023px;width:1546px;height:16px;background:#535353;"></div>
<div class="a" style="left:40px;top:1023px;width:50px;height:16px;background:#484848;"></div>
<div class="t" style="left:52px;top:1026.54px;font-size:10px;color:#e8e8e8;font-weight:400;font-style:normal;">100%</div>
<div class="t" style="left:130px;top:1026.54px;font-size:10px;color:#e0e0e0;font-weight:400;font-style:normal;">Док: 2,40M/0 байт</div>
<svg style="left:262px;top:1026px;" width="6" height="10" viewBox="0 0 6 10"><path d="M1 1l3.5 4L1 9" fill="none" stroke="#a8a8a8" stroke-width="1.2"/></svg>
<div class="a" style="left:273px;top:1023px;width:1313px;height:16px;background:#4b4b4b;"></div>
<div class="a" style="left:0px;top:58px;width:38px;height:981px;background:#535353;"></div>
<div class="a" style="left:0px;top:58px;width:40px;height:13px;background:#3d3d3d;"></div>
<div class="a" style="left:1px;top:71px;width:37px;height:17px;background:#565656;"></div>
<div class="a" style="left:38px;top:58px;width:2px;height:981px;background:#3a3a3a;"></div>
<div class="a" style="left:0px;top:71px;width:1px;height:968px;background:#4b4b4b;"></div>
<svg style="left:6px;top:61px;" width="9" height="7" viewBox="0 0 9 7"><path d="M1 1l2.5 2.5L1 6M5 1l2.5 2.5L5 6" fill="none" stroke="#d8d8d8" stroke-width="1.3"/></svg>
<div class="a" style="left:4px;top:88px;width:31px;height:23px;background:#3b3b3b;"></div>
<svg style="left:0px;top:0px;" width="1" height="1" viewBox="0 0 1 1"><g transform="translate(19.5,99.5) scale(1.0)" fill="#e2e2e2" stroke="#e2e2e2"><path d="M-6 0H6M0 -6V6" stroke-width="1.6"/><path d="M-8 0l3-3v6zM8 0l-3-3v6zM0 -8l-3 3h6zM0 8l-3-3h6z" stroke="none"/></g></svg>
<svg style="left:0px;top:0px;" width="1" height="1" viewBox="0 0 1 1"><path d="M12.5 123v-3.5h4M20.5 119.5h-2.5M24 119.5h3.5v3.5M27.5 126.5v-1.5M27.5 128v3.5h-3.5M20.5 131.5h-2.5M16.5 131.5h-4v-3.5M12.5 126.5v-1.5" fill="none" stroke="#e2e2e2" stroke-width="1.4"/><path d="M32 135h-3l3-3z" fill="#b0b0b0"/></svg>
<svg style="left:0px;top:0px;" width="1" height="1" viewBox="0 0 1 1"><path d="M11 145.5l8 4 8-6v8.5l-11 5.5" fill="none" stroke="#e2e2e2" stroke-width="1.4" stroke-linejoin="round"/><path d="M14 147.5l3.5 6" stroke="#e2e2e2" stroke-width="1.3"/><circle cx="18" cy="155.3" r="1.9" fill="none" stroke="#e2e2e2" stroke-width="1.3"/><path d="M16.7 156.8l-3.2 3.5" stroke="#e2e2e2" stroke-width="1.3"/><path d="M32 161h-3l3-3z" fill="#b0b0b0"/></svg>
<svg style="left:0px;top:0px;" width="1" height="1" viewBox="0 0 1 1"><path d="M13.5 184.5l8.5-8.5" stroke="#e2e2e2" stroke-width="3.6" stroke-linecap="round"/><g fill="#e2e2e2"><path d="M19.5 169l.8 1.7 1.7.8-1.7.8-.8 1.7-.8-1.7-1.7-.8 1.7-.8z"/><path d="M27.5 169l.8 1.7 1.7.8-1.7.8-.8 1.7-.8-1.7-1.7-.8 1.7-.8z"/><circle cx="28.3" cy="177.3" r="1"/></g><path d="M32 187h-3l3-3z" fill="#b0b0b0"/></svg>
<svg style="left:0px;top:0px;" width="1" height="1" viewBox="0 0 1 1"><g fill="#e8e8e8"><rect x="9" y="196" width="2" height="2"/><rect x="13" y="196" width="2" height="2"/><rect x="11" y="198" width="2" height="2"/><rect x="9" y="200" width="2" height="2"/><rect x="13" y="200" width="2" height="2"/><rect x="11" y="202" width="2" height="2"/></g><g fill="#222"><rect x="11" y="196" width="2" height="2"/><rect x="9" y="198" width="2" height="2"/><rect x="13" y="198" width="2" height="2"/><rect x="11" y="200" width="2" height="2"/><rect x="9" y="202" width="2" height="2"/><rect x="13" y="202" width="2" height="2"/></g><path d="M14.5 209.5l6.5-6.5" stroke="#e2e2e2" stroke-width="3.6" stroke-linecap="round"/><path d="M14.5 209.5l6.5-6.5" stroke="#535353" stroke-width="1.2" stroke-linecap="round"/><path d="M19 199l5 5" stroke="#e2e2e2" stroke-width="3"/><path d="M22.5 200.5l4-4" stroke="#e2e2e2" stroke-width="4.5" stroke-linecap="round"/></svg>
<svg style="left:0px;top:0px;" width="1" height="1" viewBox="0 0 1 1"><path d="M12.5 237.5l1.2-4.8 10.8-10.8 3.6 3.6-10.8 10.8z" fill="none" stroke="#e2e2e2" stroke-width="1.5" stroke-linejoin="round"/><path d="M13.7 232.7l3.6 3.6" stroke="#e2e2e2" stroke-width="1.2"/><path d="M32 240h-3l3-3z" fill="#b0b0b0"/></svg>
<svg style="left:0px;top:0px;" width="1" height="1" viewBox="0 0 1 1"><circle cx="20" cy="251.5" r="3.2" fill="#e2e2e2"/><rect x="19" y="253" width="2.2" height="5" fill="#e2e2e2"/><rect x="13.5" y="258" width="13" height="3.5" fill="#e2e2e2"/><rect x="14" y="263" width="12" height="1.6" fill="#e2e2e2"/><path d="M32 266h-3l3-3z" fill="#b0b0b0"/></svg>
<svg style="left:0px;top:0px;" width="1" height="1" viewBox="0 0 1 1"><path d="M13.5 284.5l8-8 5.5 5.5-8 8h-3z" fill="none" stroke="#e2e2e2" stroke-width="1.4" stroke-linejoin="round"/><path d="M21.5 276.5l3-3 5.5 5.5-3 3z" fill="#e2e2e2"/><path d="M17 280.5l5.5 5.5" stroke="#e2e2e2" stroke-width="1.2"/><path d="M16 288.5h12.5" stroke="#e2e2e2" stroke-width="1.2"/><path d="M32 290h-3l3-3z" fill="#b0b0b0"/></svg>
<svg style="left:0px;top:0px;" width="1" height="1" viewBox="0 0 1 1"><g fill="#e8e8e8"><rect x="9" y="300" width="2" height="2"/><rect x="13" y="300" width="2" height="2"/><rect x="11" y="302" width="2" height="2"/><rect x="9" y="304" width="2" height="2"/><rect x="13" y="304" width="2" height="2"/><rect x="11" y="306" width="2" height="2"/></g><g fill="#222"><rect x="11" y="300" width="2" height="2"/><rect x="9" y="302" width="2" height="2"/><rect x="13" y="302" width="2" height="2"/><rect x="11" y="304" width="2" height="2"/><rect x="9" y="306" width="2" height="2"/><rect x="13" y="306" width="2" height="2"/></g><path d="M16.5 311.5l5.5-7.5 5.5 7-5.5 5.5z" fill="none" stroke="#e2e2e2" stroke-width="1.5" stroke-linejoin="round"/><path d="M21 303.5l1.5 5" stroke="#e2e2e2" stroke-width="1.2"/><circle cx="29.3" cy="313.5" r="1.7" fill="#e2e2e2"/></svg>
<svg style="left:0px;top:0px;" width="1" height="1" viewBox="0 0 1 1"><path d="M15 327h12v4h-1l-.8-2.2h-3.6v10.5l1.9.7v1H17.5v-1l1.9-.7v-10.5h-3.6l-.8 2.2h-1z" fill="#e2e2e2"/><path d="M32 343h-3l3-3z" fill="#b0b0b0"/></svg>
<svg style="left:0px;top:0px;" width="1" height="1" viewBox="0 0 1 1"><path d="M13.5 367l1-6.5 6.5-5.5 5 5-5.5 6.5z" fill="none" stroke="#e2e2e2" stroke-width="1.5" stroke-linejoin="round"/><path d="M13.8 366.7l5-5" stroke="#e2e2e2" stroke-width="1.2"/><circle cx="19.5" cy="361" r="1" fill="#e2e2e2"/><path d="M21 355l2-2 4 4-2 2z" fill="#e2e2e2" stroke="#e2e2e2" stroke-width="1.4" stroke-linejoin="round"/><path d="M32 369h-3l3-3z" fill="#b0b0b0"/></svg>
<svg style="left:0px;top:0px;" width="1" height="1" viewBox="0 0 1 1"><path d="M16.5 378.5v13.5l3-3 2.5 5 2-1-2.5-4.8h4.3z" fill="#0e0e0e" stroke="#e2e2e2" stroke-width="1.1" stroke-linejoin="round"/><path d="M32 395h-3l3-3z" fill="#b0b0b0"/></svg>
<svg style="left:0px;top:0px;" width="1" height="1" viewBox="0 0 1 1"><rect x="12.7" y="405.7" width="14.6" height="12.2" fill="#6b6b6b" stroke="#e2e2e2" stroke-width="1.4"/><path d="M32 421h-3l3-3z" fill="#b0b0b0"/></svg>
<svg style="left:0px;top:0px;" width="1" height="1" viewBox="0 0 1 1"><g stroke="#e2e2e2" stroke-linecap="round" fill="none"><path d="M16.3 438V432" stroke-width="2.2"/><path d="M19 437V430.5" stroke-width="2.2"/><path d="M21.7 437V431" stroke-width="2.2"/><path d="M24.2 438V433" stroke-width="2.1"/><path d="M13 439.5l3 3.5" stroke-width="2.3"/></g><path d="M15 437.5h10.5v3.5l-2.2 5H17.5l-2.8-4z" fill="#e2e2e2"/><path d="M32 447h-3l3-3z" fill="#b0b0b0"/></svg>
<svg style="left:0px;top:0px;" width="1" height="1" viewBox="0 0 1 1"><circle cx="17.5" cy="461.5" r="5.3" fill="none" stroke="#e2e2e2" stroke-width="1.6"/><path d="M21.5 465.5l5.5 5.5" stroke="#e2e2e2" stroke-width="2.3" stroke-linecap="round"/></svg>
<svg style="left:0px;top:0px;" width="1" height="1" viewBox="0 0 1 1"><circle cx="13.6" cy="490" r="2.1" fill="#e2e2e2"/><circle cx="19.8" cy="490" r="2.1" fill="#e2e2e2"/><circle cx="26" cy="490" r="2.1" fill="#e2e2e2"/><path d="M32 497h-3l3-3z" fill="#b0b0b0"/></svg>
<svg style="left:0px;top:0px;" width="1" height="1" viewBox="0 0 1 1"><rect x="8" y="512.5" width="6.5" height="6.5" fill="#f0f0f0" stroke="#1c1c1c" stroke-width="0.8"/><rect x="5" y="509.5" width="5.5" height="5.5" fill="#000" stroke="#e8e8e8" stroke-width="1"/></svg>
<svg style="left:0px;top:0px;" width="1" height="1" viewBox="0 0 1 1"><path d="M24 511.5h4.5v5" fill="none" stroke="#e2e2e2" stroke-width="1.4"/><path d="M21.5 511.5l3-2.8v5.6zM28.5 519l-2.8-3h5.6z" fill="#e2e2e2"/></svg>
<div class="a" style="left:14px;top:534px;width:20px;height:20px;background:#ffffff;border:1px solid #222"></div>
<div class="a" style="left:4px;top:524px;width:20px;height:20px;background:#ffffff;border:1px solid #222"></div>
<svg style="left:0px;top:0px;" width="1" height="1" viewBox="0 0 1 1"><rect x="11.2" y="565.7" width="16.8" height="12" fill="none" stroke="#e2e2e2" stroke-width="1.4"/><circle cx="19.6" cy="571.7" r="3.6" fill="none" stroke="#e2e2e2" stroke-width="1.2" stroke-dasharray="1.1 1.1"/></svg>
<svg style="left:0px;top:0px;" width="1" height="1" viewBox="0 0 1 1"><rect x="16.2" y="591.7" width="11.5" height="8" fill="none" stroke="#e2e2e2" stroke-width="1.4"/><path d="M16.2 595.5H11.5v8.5h11v-4.3" fill="none" stroke="#e2e2e2" stroke-width="1.4"/><path d="M32 607h-3l3-3z" fill="#b0b0b0"/></svg>
<div class="a" style="left:1800px;top:58px;width:119px;height:344px;background:#535353;"></div>
<div class="a" style="left:1800px;top:58px;width:119px;height:13px;background:#424242;"></div>
<div class="a" style="left:1800px;top:58px;width:1px;height:344px;background:#383838;"></div>
<div class="a" style="left:1840px;top:58px;width:2px;height:344px;background:#383838;"></div>
<div class="a" style="left:1880px;top:58px;width:2px;height:344px;background:#383838;"></div>
<svg style="left:1826px;top:61px;" width="9" height="7" viewBox="0 0 9 7"><path d="M4 1L1.5 3.5 4 6M8 1L5.5 3.5 8 6" fill="none" stroke="#e0e0e0" stroke-width="1.3"/></svg>
<svg style="left:1866px;top:61px;" width="9" height="7" viewBox="0 0 9 7"><path d="M4 1L1.5 3.5 4 6M8 1L5.5 3.5 8 6" fill="none" stroke="#e0e0e0" stroke-width="1.3"/></svg>
<svg style="left:1906px;top:61px;" width="9" height="7" viewBox="0 0 9 7"><path d="M4 1L1.5 3.5 4 6M8 1L5.5 3.5 8 6" fill="none" stroke="#e0e0e0" stroke-width="1.3"/></svg>
<div class="a" style="left:1801px;top:111px;width:39px;height:1px;background:#383838;"></div>
<div class="a" style="left:1842px;top:139px;width:38px;height:1px;background:#383838;"></div>
<div class="a" style="left:1882px;top:111px;width:37px;height:1px;background:#383838;"></div>
<div class="a" style="left:1882px;top:152px;width:37px;height:1px;background:#383838;"></div>
<div class="a" style="left:1800px;top:401px;width:119px;height:1px;background:#383838;"></div>
<svg style="left:1813px;top:85px;" width="18" height="17" viewBox="0 0 18 17"><rect x="0.5" y="0.5" width="4" height="4" fill="none" stroke="#e2e2e2" stroke-width="1"/><rect x="0.5" y="6.5" width="4" height="4" fill="none" stroke="#e2e2e2" stroke-width="1"/><rect x="0" y="12" width="5" height="5" fill="#e2e2e2"/><path d="M8 15c3-2 5-6 2-10" fill="none" stroke="#e2e2e2" stroke-width="1.6"/><path d="M7 5l3-3 2 4z" fill="#e2e2e2"/></svg>
<svg style="left:1851px;top:86px;" width="20" height="15" viewBox="0 0 20 15"><path d="M10 1C4 1 0 4 0 8c0 3 3 6 8 6 3 0 2-3 4-3 3 0 7 0 7-4 0-3-4-6-9-6z" fill="#e2e2e2"/><g fill="#535353"><circle cx="4" cy="7.5" r="1.3"/><circle cx="7.5" cy="10.5" r="1.3"/><circle cx="11" cy="4" r="1.3"/><circle cx="15" cy="5" r="1.3"/><circle cx="14" cy="9" r="1.3"/><circle cx="7" cy="4" r="1.1"/></g></svg>
<svg style="left:1852px;top:115px;" width="17" height="14" viewBox="0 0 17 14"><rect x="0.5" y="0.5" width="15" height="12.5" fill="#3e3e3e" stroke="#e2e2e2" stroke-width="1"/><path d="M5.5 0.5v12.5M10.5 0.5v12.5M0.5 4.6h15M0.5 8.8h15" stroke="#e2e2e2" stroke-width="1"/><rect x="1" y="1" width="4.5" height="3.5" fill="#9a9a9a"/><rect x="6" y="1" width="4.5" height="3.5" fill="#777"/></svg>
<svg style="left:1893px;top:85px;" width="15" height="18" viewBox="0 0 15 18"><path d="M7.5 1a5.5 5.5 0 0 0-3 10.2L5.5 14h4l1-2.8A5.5 5.5 0 0 0 7.5 1z" fill="none" stroke="#e2e2e2" stroke-width="1.3"/><path d="M5.5 14.5h4v2h-4z" fill="#e2e2e2"/></svg>
<svg style="left:1891px;top:126px;" width="18" height="17" viewBox="0 0 18 17"><path d="M1 12V1h11" fill="none" stroke="#e2e2e2" stroke-width="1.2"/><rect x="3" y="3" width="13" height="13" fill="none" stroke="#e2e2e2" stroke-width="1.2"/><path d="M10.5 3v6l1.5-1.5 1.5 1.5V3z" fill="#e2e2e2"/></svg>
<div class="a" style="left:1585px;top:402px;width:334px;height:637px;background:#3a3a3a;"></div>
<div class="a" style="left:1586px;top:403px;width:333px;height:636px;background:#535353;"></div>
<div class="a" style="left:1586px;top:403px;width:333px;height:13px;background:#474747;"></div>
<svg style="left:1888px;top:408px;" width="9" height="6" viewBox="0 0 9 6"><path d="M4 0.5L1.5 3 4 5.5M8 0.5L5.5 3 8 5.5" fill="none" stroke="#e8e8e8" stroke-width="1.3"/></svg>
<svg style="left:1908px;top:408px;" width="7" height="7" viewBox="0 0 7 7"><path d="M1 1l5 5M6 1l-5 5" stroke="#e0e0e0" stroke-width="1.8"/></svg>
<div class="a" style="left:1586px;top:416px;width:333px;height:29px;background:#474747;"></div>
<div class="a" style="left:1586px;top:416px;width:42px;height:29px;background:#535353;"></div>
<div class="a" style="left:1688px;top:418px;width:1px;height:26px;background:#404040;"></div>
<div class="a" style="left:1746px;top:418px;width:1px;height:26px;background:#404040;"></div>
<div class="a" style="left:1807px;top:418px;width:1px;height:26px;background:#404040;"></div>
<div class="a" style="left:1879px;top:418px;width:1px;height:26px;background:#404040;"></div>
<div class="a" style="left:1628px;top:444px;width:291px;height:1px;background:#3e3e3e;"></div>
<div class="t" style="left:1595px;top:424.54px;font-size:10px;color:#f4f4f4;font-weight:700;font-style:normal;">Слои</div>
<div class="t" style="left:1637px;top:424.54px;font-size:10px;color:#c8c8c8;font-weight:700;font-style:normal;">Свойства</div>
<div class="t" style="left:1699px;top:424.54px;font-size:10px;color:#c8c8c8;font-weight:700;font-style:normal;">Каналы</div>
<div class="t" style="left:1756px;top:424.54px;font-size:10px;color:#c8c8c8;font-weight:700;font-style:normal;">Контуры</div>
<div class="t" style="left:1817px;top:424.54px;font-size:10px;color:#c8c8c8;font-weight:700;font-style:normal;">Коррекция</div>
<svg style="left:1904px;top:427px;" width="11" height="8" viewBox="0 0 11 8"><path d="M0 0.5h10M0 2.5h10M0 4.5h10M0 6.5h10" stroke="#d8d8d8" stroke-width="1"/></svg>
<div class="a" style="left:1590px;top:455px;width:120px;height:18px;background:#4a4a4a;border:1px solid #474747"></div>
<svg style="left:1597px;top:457px;" width="12" height="12" viewBox="0 0 12 12"><circle cx="4.5" cy="4.5" r="3.5" fill="none" stroke="#c8c8c8" stroke-width="1.3"/><path d="M7 7l3.5 3.5" stroke="#c8c8c8" stroke-width="1.8"/></svg>
<div class="t" style="left:1612px;top:459.54px;font-size:10px;color:#8c8c8c;font-weight:400;font-style:normal;">Вид</div>
<svg style="left:1754px;top:458px;" width="12" height="10" viewBox="0 0 12 10"><rect x="0.5" y="0.5" width="11" height="9" fill="none" stroke="#bdbdbd" stroke-width="1"/><path d="M2 8l2.5-3 2 2 1.5-1.5L10 8z" fill="#bdbdbd"/></svg>
<svg style="left:1778px;top:457px;" width="12" height="12" viewBox="0 0 12 12"><circle cx="6" cy="6" r="5.5" fill="#bdbdbd"/><path d="M3 9l6-6" stroke="#535353" stroke-width="1.5"/></svg>
<svg style="left:1804px;top:458px;" width="11" height="10" viewBox="0 0 11 10"><path d="M0 0h10v3H9L8.5 1.5H6V8.5l1 .5V10H3V9l1-.5V1.5H1.5L1 3H0z" fill="#bdbdbd"/></svg>
<svg style="left:1827px;top:458px;" width="11" height="11" viewBox="0 0 11 11"><rect x="1.5" y="1.5" width="8" height="8" fill="none" stroke="#bdbdbd" stroke-width="1"/><g fill="#bdbdbd"><rect x="0" y="0" width="3" height="3"/><rect x="8" y="0" width="3" height="3"/><rect x="0" y="8" width="3" height="3"/><rect x="8" y="8" width="3" height="3"/></g></svg>
<svg style="left:1852px;top:457px;" width="11" height="12" viewBox="0 0 11 12"><path d="M3 0.5h4.5l2.5 2.5v8.5H3z" fill="none" stroke="#bdbdbd" stroke-width="1"/><rect x="0" y="6" width="6" height="6" fill="#bdbdbd"/></svg>
<svg style="left:1906px;top:454px;" width="10" height="10" viewBox="0 0 10 10"><circle cx="5" cy="4.5" r="4.3" fill="#9a9a9a"/></svg>
<div class="a" style="left:1586px;top:476px;width:333px;height:1px;background:#3e3e3e;"></div>
<div class="a" style="left:1591px;top:482px;width:182px;height:19px;background:#4c4c4c;border:1px solid #484848"></div>
<div class="t" style="left:1599px;top:487.54px;font-size:10px;color:#878787;font-weight:400;font-style:normal;">Обычные</div>
<div class="t" style="left:1781px;top:487.54px;font-size:10px;color:#7a7a7a;font-weight:400;font-style:normal;">Непрозрачность:</div>
<div class="a" style="left:1864px;top:483px;width:34px;height:13px;background:#454545;"></div>
<div class="t" style="left:1868px;top:486.38px;font-size:9px;color:#7a7a7a;font-weight:400;font-style:normal;">100%</div>
<div class="a" style="left:1901px;top:483px;width:11px;height:13px;background:#4e4e4e;"></div>
<div class="a" style="left:1586px;top:504px;width:333px;height:1px;background:#3e3e3e;"></div>
<div class="t" style="left:1592px;top:514.53px;font-size:10px;color:#6e6e6e;font-weight:400;font-style:normal;">Закрепить:</div>
<svg style="left:1653px;top:513px;" width="11" height="11" viewBox="0 0 11 11"><rect x="0.5" y="0.5" width="10" height="10" fill="none" stroke="#b8b8b8" stroke-width="1"/><g fill="#b8b8b8"><rect x="1" y="1" width="3" height="3"/><rect x="7" y="1" width="3" height="3"/><rect x="4" y="4" width="3" height="3"/><rect x="1" y="7" width="3" height="3"/><rect x="7" y="7" width="3" height="3"/></g></svg>
<svg style="left:1674px;top:512px;" width="14" height="14" viewBox="0 0 14 14"><path d="M12.5 1.2L7.5 7" stroke="#b8b8b8" stroke-width="2.4" stroke-linecap="round"/><path d="M6.3 7.2c-2.3-.2-3.6 1.3-4.1 3.2-.3 1.2-1 2.2-1.7 2.8 2.5.3 5.2-.3 6.4-2.2.6-1 .6-2.4-.6-3.8z" fill="#b8b8b8"/></svg>
<svg style="left:1696px;top:512px;" width="14" height="14" viewBox="0 0 14 14"><path d="M7 1v12M1 7h12" stroke="#b8b8b8" stroke-width="1"/><g fill="#b8b8b8"><circle cx="7" cy="1.5" r="1.5"/><circle cx="7" cy="12.5" r="1.5"/><circle cx="1.5" cy="7" r="1.5"/><circle cx="12.5" cy="7" r="1.5"/></g></svg>
<svg style="left:1718px;top:512px;" width="16" height="14" viewBox="0 0 16 14"><path d="M3 0v14M0 3h11v10M0 11h14" fill="none" stroke="#b8b8b8" stroke-width="1"/><path d="M4 4h5l2 2v3H4z" fill="#b8b8b8" opacity="0.6"/></svg>
<svg style="left:1741px;top:512px;" width="12" height="13" viewBox="0 0 12 13"><path d="M3 6V4a3 3 0 0 1 6 0v2" fill="none" stroke="#b8b8b8" stroke-width="1.6"/><rect x="1" y="6" width="10" height="7" fill="#b8b8b8"/></svg>
<div class="t" style="left:1818px;top:514.53px;font-size:10px;color:#6e6e6e;font-weight:400;font-style:normal;">Заливка:</div>
<div class="a" style="left:1864px;top:512px;width:34px;height:13px;background:#454545;"></div>
<div class="t" style="left:1868px;top:515.38px;font-size:9px;color:#7a7a7a;font-weight:400;font-style:normal;">100%</div>
<div class="a" style="left:1901px;top:512px;width:11px;height:13px;background:#4e4e4e;"></div>
<div class="a" style="left:1586px;top:532px;width:318px;height:483px;background:#4c4c4c;"></div>
<div class="a" style="left:1904px;top:532px;width:15px;height:483px;background:#4f4f4f;"></div>
<div class="a" style="left:1586px;top:533px;width:318px;height:31px;background:#4d4d4d;"></div>
<div class="a" style="left:1616px;top:535px;width:287px;height:27px;background:#6a6a6a;"></div>
<svg style="left:1594px;top:544px;" width="15" height="10" viewBox="0 0 15 10"><path d="M0.5 5C2.5 1.5 5 0.5 7.5 0.5S12.5 1.5 14.5 5C12.5 8.5 10 9.5 7.5 9.5S2.5 8.5 0.5 5z" fill="#f0f0f0"/><circle cx="7.5" cy="5" r="2.2" fill="#3a3a3a"/></svg>
<div class="a" style="left:1620px;top:539px;width:32px;height:19px;background:#ffffff;border:1px solid #1e1e1e"></div>
<div class="t" style="left:1663px;top:544.53px;font-size:10px;color:#f0f0f0;font-weight:400;font-style:italic;">Фон</div>
<svg style="left:1877px;top:543px;" width="11" height="12" viewBox="0 0 11 12"><path d="M3 5.5V3.5a2.5 2.5 0 0 1 5 0v2" fill="none" stroke="#f0f0f0" stroke-width="1.2"/><rect x="1" y="5.5" width="9" height="6" fill="none" stroke="#f0f0f0" stroke-width="1.2"/><rect x="4.5" y="7.5" width="2" height="2" fill="#f0f0f0"/></svg>
<div class="a" style="left:1586px;top:1015px;width:333px;height:1px;background:#3e3e3e;"></div>
<svg style="left:1716px;top:1023px;" width="16" height="9" viewBox="0 0 16 9"><path d="M5 1H4a3.5 3.5 0 0 0 0 7h1M11 1h1a3.5 3.5 0 0 1 0 7h-1M5 4.5h6" fill="none" stroke="#9e9e9e" stroke-width="1.6"/></svg>
<div class="t" style="left:1745px;top:1021.00px;font-size:13px;color:#8e8e8e;font-weight:400;font-style:italic;font-family:'Liberation Serif'">fx</div>
<svg style="left:1771px;top:1022px;" width="14" height="10" viewBox="0 0 14 10"><rect x="0" y="0" width="13.5" height="10" fill="#bdbdbd"/><circle cx="6.75" cy="5" r="2.6" fill="#353535"/></svg>
<svg style="left:1800px;top:1022px;" width="12" height="13" viewBox="0 0 12 13"><circle cx="5.5" cy="5.5" r="5.2" fill="#bdbdbd"/><path d="M2.5 8.5l6-6" stroke="#535353" stroke-width="1.4"/><path d="M8 11.5h4l-2 2z" fill="#e0e0e0"/></svg>
<svg style="left:1825px;top:1021px;" width="14" height="11" viewBox="0 0 14 11"><path d="M0 2h5v-1.5h0" stroke="#bdbdbd" stroke-width="1"/><rect x="0" y="2" width="13" height="9" fill="#bdbdbd"/></svg>
<svg style="left:1853px;top:1022px;" width="12" height="11" viewBox="0 0 12 11"><rect x="0.6" y="0.6" width="10.8" height="10" fill="none" stroke="#d8d8d8" stroke-width="1.2"/><path d="M6 3v5M3.5 5.5h5" stroke="#d8d8d8" stroke-width="1.2"/></svg>
<svg style="left:1880px;top:1021px;" width="11" height="12" viewBox="0 0 11 12"><path d="M0 2.5h10.5M3.5 2.5V0.6h3.5v1.9M1.5 3.5v8h7.5v-8M3.5 4.5v6M5.3 4.5v6M7.1 4.5v6" fill="none" stroke="#9e9e9e" stroke-width="1"/></svg>
</body></html>
